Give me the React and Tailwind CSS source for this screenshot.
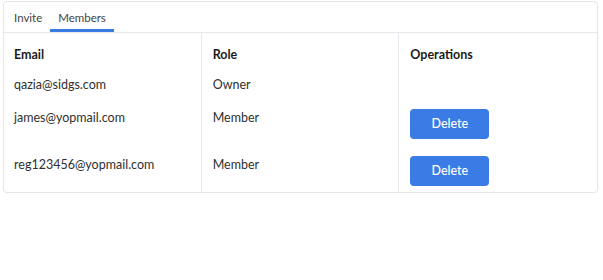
import React, { useState } from 'react';

const members = [
  { email: 'qazia@sidgs.com', role: 'Owner', canDelete: false },
  { email: 'james@yopmail.com', role: 'Member', canDelete: true },
  { email: 'reg123456@yopmail.com', role: 'Member', canDelete: true },
];

const App = () => {
  const [tab, setTab] = useState('members');

  return (
    <div className="w-[603px] h-[280px] bg-white pt-[1px] pl-[3px] font-['Lato',sans-serif]">
      <div className="w-[595px] rounded-[4px] border border-[#e3e5ea] bg-white overflow-hidden">
        {/* tabs */}
        <div className="flex h-[31px] border-b border-[#e6e8ee] text-[11.5px] text-[#444]">
          <button
            onClick={() => setTab('invite')}
            className={`w-[46px] pl-[10px] text-left pt-[4px] border-b-[3px] ${tab === 'invite' ? 'border-[#3a7be3]' : 'border-transparent'}`}
          >
            Invite
          </button>
          <button
            onClick={() => setTab('members')}
            className={`w-[64px] text-center pt-[4px] border-b-[3px] ${tab === 'members' ? 'border-[#3a7be3]' : 'border-transparent'}`}
          >
            Members
          </button>
        </div>

        {/* table */}
        <div className="grid grid-cols-3 text-[12.5px] leading-[20px] text-[#303030]">
          <div className="border-r border-[#e8e9ee] px-[10px] pt-[12px] pb-[1px] font-bold text-[#1b1b1b]">Email</div>
          <div className="border-r border-[#e8e9ee] px-[11px] pt-[12px] pb-[1px] font-bold text-[#1b1b1b]">Role</div>
          <div className="px-[11px] pt-[12px] pb-[1px] font-bold text-[#1b1b1b]">Operations</div>

          {members.map((m, i) => {
            const last = i === members.length - 1;
            const textPad = !m.canDelete ? 'pt-[9px] pb-[5px]' : 'pt-[8px]';
            const opPad = !m.canDelete ? 'pt-[9px] pb-[5px]' : last ? 'pt-[9px] pb-[6px]' : 'pt-[9px] pb-[8px]';
            return (
              <React.Fragment key={m.email}>
                <div className={`border-r border-[#e8e9ee] px-[10px] ${textPad}`}>{m.email}</div>
                <div className={`border-r border-[#e8e9ee] px-[11px] ${textPad}`}>{m.role}</div>
                <div className={`px-[11px] ${opPad}`}>
                  {m.canDelete && (
                    <button className="w-[79px] h-[30px] rounded-[4px] bg-[#3a7be5] text-white text-[12.5px] font-medium">
                      Delete
                    </button>
                  )}
                </div>
              </React.Fragment>
            );
          })}
        </div>
      </div>
    </div>
  );
};

export default App;
